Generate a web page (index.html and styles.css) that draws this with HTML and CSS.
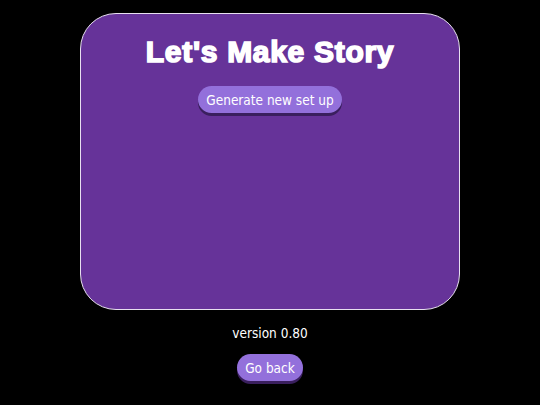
FILE: index.html
```html
<!DOCTYPE html>
<html>
<head>
<meta charset="utf-8">
<link rel="stylesheet" href="styles.css">
</head>
<body>
<main class="page">
  <section class="card">
    <h1 class="title">Let's Make Story</h1>
    <button class="btn">Generate new set up</button>
  </section>
  <p class="version">version 0.80</p>
  <button class="btn">Go back</button>
</main>
</body>
</html>
```

FILE: styles.css
```css
html, body {
  margin: 0;
  padding: 0;
  background: #000;
  width: 540px;
  height: 405px;
  overflow: hidden;
}
.page {
  display: flex;
  flex-direction: column;
  align-items: center;
  padding-top: 13px;
  font-family: "DejaVu Sans Condensed", "DejaVu Sans", sans-serif;
  color: #fff;
}
.card {
  box-sizing: border-box;
  width: 380px;
  height: 297px;
  background: #663399;
  border: 1px solid #e8e0f0;
  border-radius: 36px;
  display: flex;
  flex-direction: column;
  align-items: center;
}
.title {
  margin: 21px 0 0;
  font-family: "Liberation Sans", Arial, sans-serif;
  font-weight: 900;
  font-size: 30px;
  line-height: 34px;
  letter-spacing: 0.7px;
  -webkit-text-stroke: 1.6px #fff;
  color: #fff;
}
.card .btn {
  margin-top: 17px;
}
.btn {
  font-family: "DejaVu Sans Condensed", "DejaVu Sans", sans-serif;
  font-size: 13.5px;
  color: #fff;
  background: #9370db;
  border: none;
  border-radius: 14px;
  height: 27px;
  padding: 0 8px;
  box-shadow: 0 3px 0 #3a1f5e;
  cursor: pointer;
}
.version {
  margin: 14px 0 12px;
  font-size: 13.5px;
  line-height: 18px;
}
```
